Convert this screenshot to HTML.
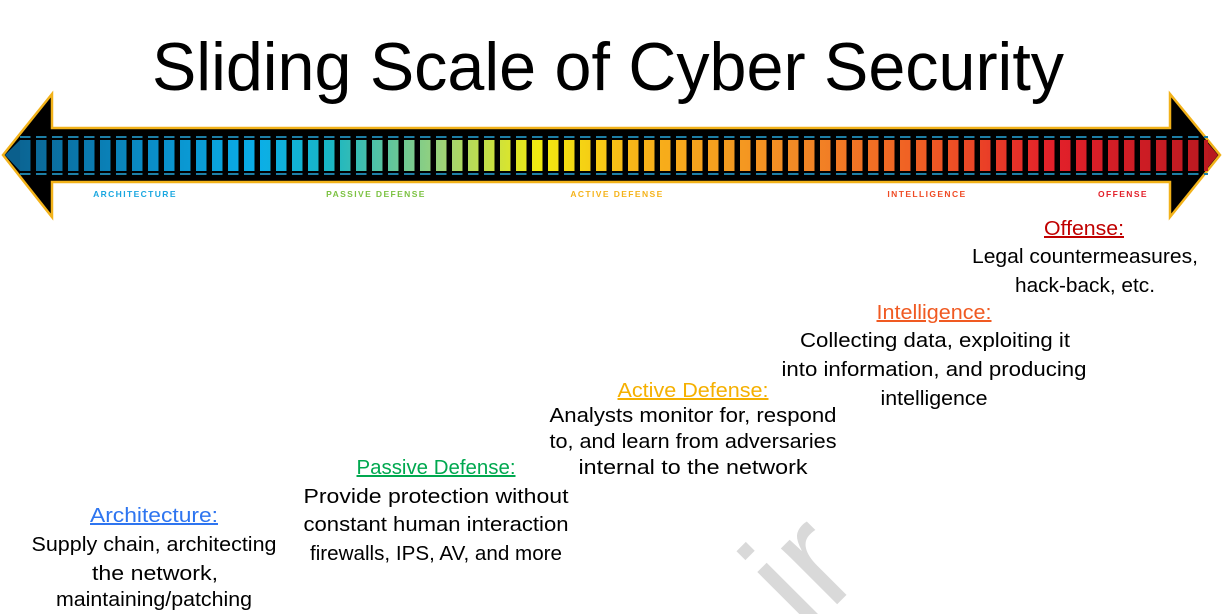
<!DOCTYPE html>
<html><head><meta charset="utf-8"><style>
html,body{margin:0;padding:0;background:#fff;width:1223px;height:614px;overflow:hidden}
svg{display:block;overflow:hidden}
text{font-family:"Liberation Sans",sans-serif}
</style></head><body>
<svg width="1223" height="614" viewBox="0 0 1223 614" xmlns="http://www.w3.org/2000/svg">
<defs>
<linearGradient id="g" x1="0" x2="1223" y1="0" y2="0" gradientUnits="userSpaceOnUse">
<stop offset="0" stop-color="#0b5f8c"/>
<stop offset="0.12" stop-color="#0a8cc6"/>
<stop offset="0.21" stop-color="#0aaee8"/>
<stop offset="0.27" stop-color="#19b6c4"/>
<stop offset="0.36" stop-color="#9bd27a"/>
<stop offset="0.44" stop-color="#f2ec10"/>
<stop offset="0.52" stop-color="#f8b418"/>
<stop offset="0.65" stop-color="#f28a25"/>
<stop offset="0.76" stop-color="#ef5a24"/>
<stop offset="0.86" stop-color="#e3202a"/>
<stop offset="1" stop-color="#b8191f"/>
</linearGradient>
<pattern id="p" x="20" y="0" width="16" height="614" patternUnits="userSpaceOnUse">
<rect x="0" y="140" width="10.5" height="31" fill="#fff"/>
</pattern>
<pattern id="d" x="20" y="0" width="16" height="614" patternUnits="userSpaceOnUse">
<rect x="0" y="136" width="10.5" height="2" fill="#1d7fa6"/>
<rect x="0" y="173" width="10.5" height="2" fill="#1d7fa6"/>
</pattern>
<mask id="m"><rect x="0" y="0" width="1223" height="614" fill="url(#p)"/></mask>
<clipPath id="c"><rect x="0" y="0" width="1223" height="614"/></clipPath>
</defs>
<text x="608" y="90" font-size="68" text-anchor="middle" textLength="912" lengthAdjust="spacingAndGlyphs" fill="#000">Sliding Scale of Cyber Security</text>
<path d="M3,155 L52,94 L52,128 L1170,128 L1170,94 L1220,155 L1170,217 L1170,182 L52,182 L52,217 Z" fill="#000" stroke="#f2b21a" stroke-width="2.5" stroke-linejoin="miter"/>
<path d="M5,155 L20,140 L20,171 Z" fill="#0b5f8c"/>
<path d="M1218,155 L1205,140 L1205,171 Z" fill="#b8191f"/>
<rect x="18" y="138" width="1190" height="35" fill="url(#g)" mask="url(#m)"/>
<rect x="18" y="134" width="1190" height="44" fill="url(#d)"/>
<g font-size="8.5" font-weight="bold" letter-spacing="1.4" text-anchor="middle">
<text x="135" y="197" fill="#1aa7e0">ARCHITECTURE</text>
<text x="376" y="197" fill="#7cc242">PASSIVE DEFENSE</text>
<text x="617" y="197" fill="#f5b31a">ACTIVE DEFENSE</text>
<text x="927" y="197" fill="#ef4b25">INTELLIGENCE</text>
<text x="1123" y="197" fill="#e3202a">OFFENSE</text>
</g>
<g clip-path="url(#c)">
<text x="806" y="618" font-size="150" fill="#d9d9d9" transform="rotate(-45 806 576)" text-anchor="middle">ir</text>
</g>
<g font-size="20" text-anchor="middle">
<text x="1084" y="235" fill="#c00000" text-decoration="underline" textLength="80" lengthAdjust="spacingAndGlyphs">Offense:</text>
<text x="1085" y="263" textLength="226" lengthAdjust="spacingAndGlyphs">Legal countermeasures,</text>
<text x="1085" y="292" textLength="140" lengthAdjust="spacingAndGlyphs">hack-back, etc.</text>
<text x="934" y="319" fill="#f05a22" text-decoration="underline" textLength="115" lengthAdjust="spacingAndGlyphs">Intelligence:</text>
<text x="935" y="347" textLength="270" lengthAdjust="spacingAndGlyphs">Collecting data, exploiting it</text>
<text x="934" y="376" textLength="305" lengthAdjust="spacingAndGlyphs">into information, and producing</text>
<text x="934" y="405" textLength="107" lengthAdjust="spacingAndGlyphs">intelligence</text>
<text x="693" y="397" fill="#f5b000" text-decoration="underline" textLength="151" lengthAdjust="spacingAndGlyphs">Active Defense:</text>
<text x="693" y="422" textLength="287" lengthAdjust="spacingAndGlyphs">Analysts monitor for, respond</text>
<text x="693" y="448" textLength="287" lengthAdjust="spacingAndGlyphs">to, and learn from adversaries</text>
<text x="693" y="474" textLength="229" lengthAdjust="spacingAndGlyphs">internal to the network</text>
<text x="436" y="474" fill="#00a84f" text-decoration="underline" textLength="159" lengthAdjust="spacingAndGlyphs">Passive Defense:</text>
<text x="436" y="503" textLength="265" lengthAdjust="spacingAndGlyphs">Provide protection without</text>
<text x="436" y="531" textLength="265" lengthAdjust="spacingAndGlyphs">constant human interaction</text>
<text x="436" y="560" textLength="252" lengthAdjust="spacingAndGlyphs">firewalls, IPS, AV, and more</text>
<text x="154" y="522" fill="#2e75f0" text-decoration="underline" textLength="128" lengthAdjust="spacingAndGlyphs">Architecture:</text>
<text x="154" y="551" textLength="245" lengthAdjust="spacingAndGlyphs">Supply chain, architecting</text>
<text x="155" y="580" textLength="126" lengthAdjust="spacingAndGlyphs">the network,</text>
<text x="154" y="606" textLength="196" lengthAdjust="spacingAndGlyphs">maintaining/patching</text>
</g>
</svg>
</body></html>
